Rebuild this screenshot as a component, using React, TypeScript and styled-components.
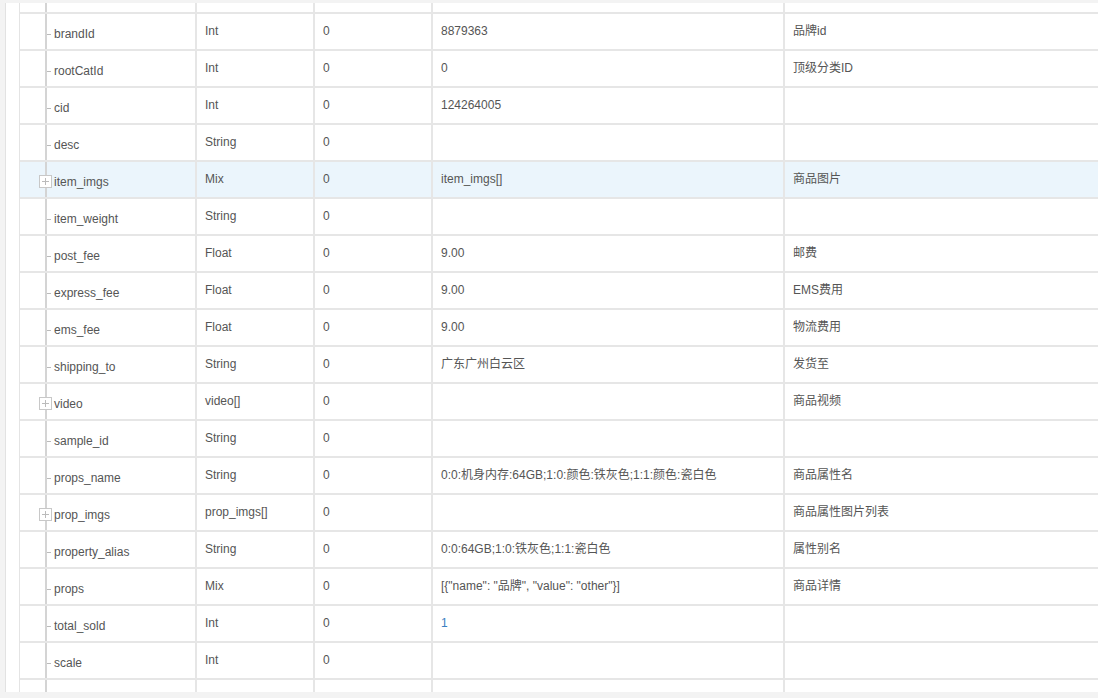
import React from "react";
import styled, { createGlobalStyle } from "styled-components";

const Global = createGlobalStyle`
  html, body { margin: 0; padding: 0; background: #f3f3f3; overflow: hidden; }
  body { font-family: Arial, "Liberation Sans", "Noto Sans CJK SC", sans-serif; font-size: 12px; color: #555; }
`;

const Panel = styled.div`
  margin: 3px 0 0 5px;
  height: 689px;
  background: #fff;
  border-left: 1px solid #e2e2e2;
  overflow: hidden;
  padding-left: 13px;
`;

const Table = styled.div`
  width: 1200px;
  border-left: 1px solid #e4e4e4;
`;

const Row = styled.div<{ $hl?: boolean; $h?: number }>`
  display: grid;
  grid-template-columns: 25px 150px 118px 118px 352px 1fr;
  height: ${(p) => p.$h ?? 37}px;
  border-bottom: 2px solid #e6e6e6;
  box-sizing: border-box;
  background: ${(p) => (p.$hl ? "#ebf5fc" : "#fff")};
`;

const Cell = styled.div<{ $tree?: boolean }>`
  position: relative;
  box-sizing: border-box;
  padding: 9px 8px 0;
  border-left: ${(p) => (p.$tree ? "2px solid #d4d4d4" : "2px solid #e6e6e6")};
  white-space: nowrap;
  overflow: hidden;
  line-height: 16px;
  &:first-child { border-left: none; }
`;

const NameCell = styled(Cell)`
  padding: 12px 0 0 7px;
  overflow: visible;
  &::before {
    content: "";
    position: absolute;
    left: 0;
    top: 20px;
    width: 4px;
    height: 1px;
    background: #bbb;
  }
`;

const Plus = styled.span`
  position: absolute;
  left: -8px;
  top: 13px;
  width: 11px;
  height: 11px;
  border: 1px solid #c8c8c8;
  background: #fff;
  z-index: 1;
  &::before, &::after {
    content: "";
    position: absolute;
    background: #bbb;
  }
  &::before { left: 2px; right: 2px; top: 5px; height: 1px; }
  &::after { top: 2px; bottom: 2px; left: 5px; width: 1px; }
`;

const Num = styled.span`
  color: #3a7fc1;
`;

type R = [string, string, string, React.ReactNode, string, boolean?];

const rows: R[] = [
  ["brandId", "Int", "0", "8879363", "品牌id"],
  ["rootCatId", "Int", "0", "0", "顶级分类ID"],
  ["cid", "Int", "0", "124264005", ""],
  ["desc", "String", "0", "", ""],
  ["item_imgs", "Mix", "0", "item_imgs[]", "商品图片", true],
  ["item_weight", "String", "0", "", ""],
  ["post_fee", "Float", "0", "9.00", "邮费"],
  ["express_fee", "Float", "0", "9.00", "EMS费用"],
  ["ems_fee", "Float", "0", "9.00", "物流费用"],
  ["shipping_to", "String", "0", "广东广州白云区", "发货至"],
  ["video", "video[]", "0", "", "商品视频", true],
  ["sample_id", "String", "0", "", ""],
  ["props_name", "String", "0", "0:0:机身内存:64GB;1:0:颜色:铁灰色;1:1:颜色:瓷白色", "商品属性名"],
  ["prop_imgs", "prop_imgs[]", "0", "", "商品属性图片列表", true],
  ["property_alias", "String", "0", "0:0:64GB;1:0:铁灰色;1:1:瓷白色", "属性别名"],
  ["props", "Mix", "0", '[{"name": "品牌", "value": "other"}]', "商品详情"],
  ["total_sold", "Int", "0", <Num>1</Num>, ""],
  ["scale", "Int", "0", "", ""],
  ["", "Int", "0", "", ""],
];

export default function App() {
  return (
    <>
      <Global />
      <Panel>
        <Table>
          <Row $h={11}>
            <Cell />
            <Cell $tree />
            <Cell />
            <Cell />
            <Cell />
            <Cell />
          </Row>
          {rows.map(([name, type, req, val, desc, plus]) => (
            <Row key={name || "last"} $hl={name === "item_imgs"}>
              <Cell />
              <NameCell $tree>
                {plus && <Plus />}
                {name}
              </NameCell>
              <Cell>{type}</Cell>
              <Cell>{req}</Cell>
              <Cell>{val}</Cell>
              <Cell>{desc}</Cell>
            </Row>
          ))}
        </Table>
      </Panel>
    </>
  );
}
